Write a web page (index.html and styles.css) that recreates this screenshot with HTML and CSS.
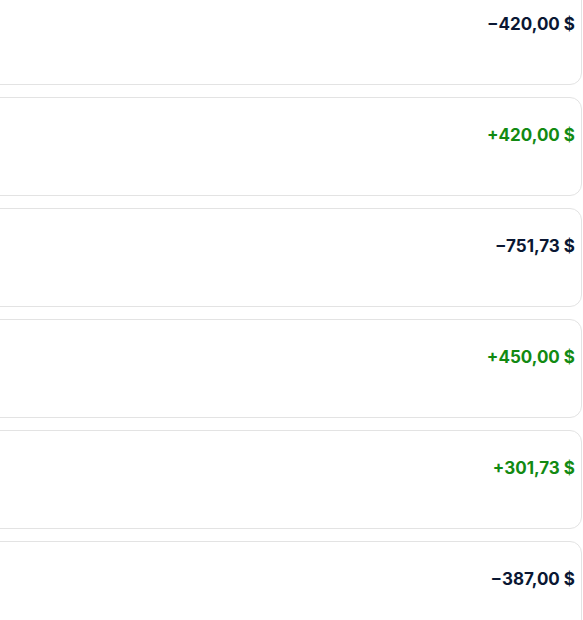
FILE: index.html
```html
<!DOCTYPE html>
<html lang="fr">
<head>
  <meta charset="UTF-8" />
  <meta name="viewport" content="width=device-width, initial-scale=1.0"/>
  <title>Transactions</title>
  <link rel="stylesheet" href="styles.css">
</head>
<body>
  <div class="list">
    <div class="tx">
      <div class="tx-info"></div>
      <div class="amount debit">−420,00 $</div>
    </div>
    <div class="tx">
      <div class="tx-info"></div>
      <div class="amount credit">+420,00 $</div>
    </div>
    <div class="tx">
      <div class="tx-info"></div>
      <div class="amount debit">−751,73 $</div>
    </div>
    <div class="tx">
      <div class="tx-info"></div>
      <div class="amount credit">+450,00 $</div>
    </div>
    <div class="tx">
      <div class="tx-info"></div>
      <div class="amount credit">+301,73 $</div>
    </div>
    <div class="tx">
      <div class="tx-info"></div>
      <div class="amount debit">−387,00 $</div>
    </div>
  </div>
</body>
</html>
```

FILE: styles.css
```css
body {
  font-family: 'Inter', sans-serif;
  background: #fff;
  margin: 0;
  overflow: hidden;
}

.list {
  margin: -14px 1px 0 -40px;
  display: flex;
  flex-direction: column;
  gap: 12px;
}

.tx {
  height: 99px;
  box-sizing: border-box;
  border: 1px solid #e3e3e3;
  border-radius: 12px;
  display: flex;
  justify-content: space-between;
  align-items: flex-start;
  padding: 27px 6px 0 16px;
}

.amount {
  font-size: 17px;
  font-weight: 700;
}

.debit {
  color: #0a1733;
}

.credit {
  color: #128a12;
}
```
